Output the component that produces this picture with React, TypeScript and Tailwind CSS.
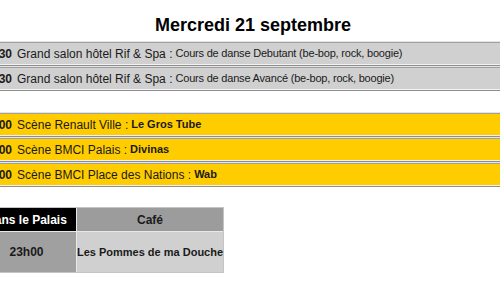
const sans = "font-['Liberation_Sans',Arial,Helvetica,sans-serif]";

interface Slot {
  time: string;
  venue: string;
  act: string;
}

const lessons: Slot[] = [
  { time: "20h30", venue: "Grand salon hôtel Rif & Spa", act: "Cours de danse Debutant (be-bop, rock, boogie)" },
  { time: "20h30", venue: "Grand salon hôtel Rif & Spa", act: "Cours de danse Avancé (be-bop, rock, boogie)" },
];

const concerts: Slot[] = [
  { time: "21h00", venue: "Scène Renault Ville", act: "Le Gros Tube" },
  { time: "21h00", venue: "Scène BMCI Palais", act: "Divinas" },
  { time: "21h00", venue: "Scène BMCI Place des Nations", act: "Wab" },
];

// old-school bevelled table row: outset frame around an inset cell
function Row({ slot, tone }: { slot: Slot; tone: "gray" | "yellow" }) {
  const bg = tone === "gray" ? "bg-[#d0d0d0]" : "bg-[#ffcc00]";
  return (
    <div className="border border-t-[#e4e4e4] border-l-[#e4e4e4] border-b-[#8e8e8e] border-r-[#8e8e8e]">
      <div
        className={`${bg} h-[23px] flex items-center px-[3px] whitespace-nowrap text-[#1a1a1a] border border-t-[#a0a0a0] border-l-[#a0a0a0] border-b-[#f2f2f2] border-r-[#f2f2f2]`}
      >
        <span className="text-[12px] font-bold">{slot.time}</span>
        <span className="text-[12px] ml-[5px]">{slot.venue} :</span>
        {tone === "gray" ? (
          <span className="text-[11px] tracking-[-0.2px] ml-[3px]">{slot.act}</span>
        ) : (
          <span className="text-[11px] font-bold ml-[3px]">{slot.act}</span>
        )}
      </div>
    </div>
  );
}

export default function App() {
  return (
    <div className={`${sans} bg-white w-[500px] h-[294px] overflow-hidden`}>
      <div className="w-[554px] -ml-[24px] pt-[14px]">
        <h1 className="text-[18px] leading-[22px] font-bold text-black text-center">
          Mercredi 21 septembre
        </h1>

        <div className="mt-[5px] -ml-[3px]">
          {lessons.map((s, i) => (
            <Row key={i} slot={s} tone="gray" />
          ))}
        </div>

        <div className="mt-[21px] -ml-[3px]">
          {concerts.map((s, i) => (
            <Row key={i} slot={s} tone="yellow" />
          ))}
        </div>

        <div className="mt-[20px] w-[248px] border border-[#c4c4c4] bg-[#e8e8e8] grid grid-cols-[99px_146px] gap-px text-[12px] font-bold">
          <div className="bg-black text-white h-[23px] flex items-center justify-center">
            Dans le Palais
          </div>
          <div className="bg-[#9c9c9c] text-[#1a1a1a] h-[23px] flex items-center justify-center">
            Café
          </div>
          <div className="bg-[#a0a0a0] text-[#1a1a1a] h-[40px] flex items-center justify-center">
            23h00
          </div>
          <div className="bg-[#d0d0d0] text-[#1a1a1a] text-[11px] h-[40px] flex items-center justify-center whitespace-nowrap">
            Les Pommes de ma Douche
          </div>
        </div>
      </div>
    </div>
  );
}
